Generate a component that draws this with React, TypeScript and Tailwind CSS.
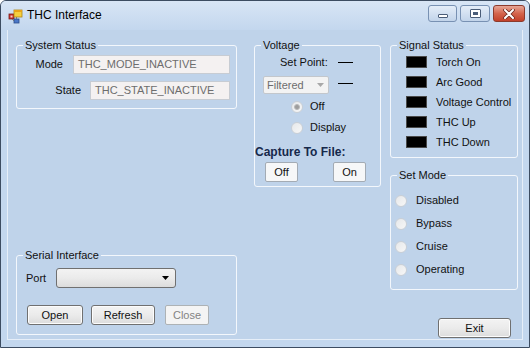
import React from "react"

function GroupBox({ title, className, children }: { title: string; className?: string; children?: React.ReactNode }) {
  return (
    <fieldset className={`border border-[#f3f7fc] rounded-[3px] ${className ?? ""}`}>
      <legend className="ml-[6px] px-[2px] text-[11px] leading-[13px] text-[#111]">{title}</legend>
      {children}
    </fieldset>
  )
}

function WinButton({ label, className, disabled }: { label: string; className?: string; disabled?: boolean }) {
  return disabled ? (
    <div
      className={`flex items-center justify-center h-[20px] rounded-[2px] border border-[#adb2b5] bg-[#f4f4f4] text-[11px] text-[#838383] ${className ?? ""}`}
    >
      {label}
    </div>
  ) : (
    <div
      className={`flex items-center justify-center h-[20px] rounded-[3px] border border-[#707070] bg-linear-to-b from-[#f3f3f3] via-[#ebebeb] to-[#dcdcdc] shadow-[inset_0_0_0_1px_#fcfcfc] text-[11px] text-[#111] ${className ?? ""}`}
    >
      {label}
    </div>
  )
}

function FlatButton({ label, className }: { label: string; className?: string }) {
  return (
    <div
      className={`flex items-center justify-center h-[20px] w-[33px] rounded-[2px] border border-[#a3abb4] bg-[#f6f7f8] text-[11px] text-[#111] ${className ?? ""}`}
    >
      {label}
    </div>
  )
}

function Radio({ checked }: { checked?: boolean }) {
  return (
    <div className="w-[12px] h-[12px] rounded-full border border-[#c9cfd6] bg-linear-to-br from-[#e6e8ea] to-[#f7f7f7] flex items-center justify-center">
      {checked && <div className="w-[6px] h-[6px] rounded-full bg-[#9d9d9d] border border-[#b9b9b9]" />}
    </div>
  )
}

function Signal({ label }: { label: string }) {
  return (
    <div className="flex items-center h-[20px]">
      <div className="ml-[15px] w-[21px] h-[12px] bg-black border border-[#4a4a4a]" />
      <span className="ml-[9px] text-[11px] text-[#111]">{label}</span>
    </div>
  )
}

function ModeOption({ label }: { label: string }) {
  return (
    <div className="flex items-center h-[23px]">
      <div className="ml-[4px]">
        <Radio />
      </div>
      <span className="ml-[9px] text-[11px] text-[#111]">{label}</span>
    </div>
  )
}

function AppIcon() {
  return (
    <svg width="16" height="16" viewBox="0 0 16 16">
      <rect x="1" y="6" width="5" height="5" fill="#c9302c" stroke="#7a1b18" strokeWidth="0.8" />
      <rect x="2.5" y="7.5" width="2" height="2" fill="#f5d0c8" />
      <rect x="6" y="2" width="8" height="7" fill="#f6cf3d" stroke="#b08510" strokeWidth="0.8" />
      <rect x="6" y="2" width="8" height="2" fill="#e8a317" />
      <rect x="6" y="11" width="5" height="4" fill="#4b78c8" stroke="#2c4d8a" strokeWidth="0.8" />
      <line x1="8.5" y1="9" x2="8.5" y2="11" stroke="#6a6a6a" strokeWidth="0.8" />
      <line x1="4" y1="11" x2="6" y2="13" stroke="#6a6a6a" strokeWidth="0.8" />
    </svg>
  )
}

export default function App() {
  return (
    <div className="w-[530px] h-[348px] font-['Liberation_Sans',Arial,sans-serif] bg-[#c3d7ee] border border-[#3c4c61] rounded-t-[6px] flex flex-col overflow-hidden">
      {/* Title bar */}
      <div className="h-[29px] flex items-start bg-linear-to-b from-[#d8e5f5] to-[#c3d7ee]">
        <div className="ml-[7px] mt-[7px]">
          <AppIcon />
        </div>
        <span className="ml-[3px] mt-[7px] text-[12px] leading-[15px] text-black">THC Interface</span>
        <div className="ml-auto mt-[4px] mr-[4px] flex">
          <div className="w-[29px] h-[17px] rounded-[3px] border border-[#7891b3] bg-linear-to-b from-[#e4edf8] to-[#c2d4ea] flex items-end justify-center pb-[3px]">
            <div className="w-[10px] h-[4px] bg-white border border-[#4a5d78] rounded-[1px]" />
          </div>
          <div className="ml-[3px] w-[30px] h-[17px] rounded-[3px] border border-[#7891b3] bg-linear-to-b from-[#e4edf8] to-[#c2d4ea] flex items-center justify-center">
            <div className="w-[11px] h-[9px] bg-white border border-[#4a5d78] rounded-[1px] flex items-center justify-center">
              <div className="w-[5px] h-[3px] bg-[#4a5d78]" />
            </div>
          </div>
          <div className="ml-[3px] w-[32px] h-[17px] rounded-[3px] border border-[#8c3a2c] bg-linear-to-b from-[#e6a595] via-[#d4644c] to-[#c2402a] flex items-center justify-center">
            <svg width="12" height="10" viewBox="0 0 12 10">
              <path d="M2 1 L10 9 M10 1 L2 9" stroke="#6a2a20" strokeWidth="3.6" strokeLinecap="round" />
              <path d="M2 1 L10 9 M10 1 L2 9" stroke="#ffffff" strokeWidth="2" strokeLinecap="round" />
            </svg>
          </div>
        </div>
      </div>

      {/* Client area */}
      <div className="mx-[6px] w-[516px] h-[310px] bg-[#bfd3ea] border border-t-0 border-[#e6eef8] flex text-[#111]">
        {/* Left column */}
        <div className="ml-[8px] w-[221px] flex flex-col">
          <GroupBox title="System Status" className="mt-[9px] h-[70px]">
            <div className="flex flex-col pr-[6px]">
              <div className="mt-[3px] flex items-center justify-end">
                <span className="text-[11px]">Mode</span>
                <div className="ml-[10px] w-[157px] h-[19px] border border-[#c7ccd3] bg-[#f4f1f1] text-[11px] text-[#6d6d6d] flex items-center pl-[4px]">
                  THC_MODE_INACTIVE
                </div>
              </div>
              <div className="mt-[7px] flex items-center justify-end">
                <span className="text-[11px]">State</span>
                <div className="ml-[9px] w-[140px] h-[19px] border border-[#c7ccd3] bg-[#f4f1f1] text-[11px] text-[#6d6d6d] flex items-center pl-[4px]">
                  THC_STATE_INACTIVE
                </div>
              </div>
            </div>
          </GroupBox>

          <GroupBox title="Serial Interface" className="mt-[140px] h-[86px]">
            <div className="mt-[6px] h-[20px] flex items-center">
              <span className="ml-[9px] w-[30px] text-[11px]">Port</span>
              <div className="w-[120px] h-[20px] rounded-[3px] border border-[#707070] bg-linear-to-b from-[#f3f3f3] via-[#ebebeb] to-[#dcdcdc] flex items-center justify-end pr-[6px]">
                <svg width="7" height="4" viewBox="0 0 7 4">
                  <path d="M0 0 H7 L3.5 4 Z" fill="#000" />
                </svg>
              </div>
            </div>
            <div className="mt-[17px] flex">
              <WinButton label="Open" className="ml-[10px] w-[56px]" />
              <WinButton label="Refresh" className="ml-[8px] w-[64px]" />
              <WinButton label="Close" className="ml-[10px] w-[44px]" disabled />
            </div>
          </GroupBox>
        </div>

        {/* Middle column */}
        <div className="ml-[17px] w-[127px] flex flex-col">
          <GroupBox title="Voltage" className="mt-[9px] h-[148px]">
            <div className="flex flex-col">
              <div className="h-[20px] flex items-center">
                <span className="ml-[25px] w-[58px] text-[11px]">Set Point:</span>
                <div className="w-[15px] h-[1px] bg-black" />
              </div>
              <div className="mt-[4px] h-[18px] flex">
                <div className="ml-[8px] w-[66px] h-[18px] rounded-[2px] border border-[#c3c7cc] bg-[#f3f3f3] flex items-center pl-[3px] text-[11px] text-[#6d6d6d]">
                  <span>Filtered</span>
                  <svg className="ml-auto mr-[4px]" width="7" height="4" viewBox="0 0 7 4">
                    <path d="M0 0 H7 L3.5 4 Z" fill="#a8a8a8" />
                  </svg>
                </div>
                <div className="ml-[9px] mt-[7px] w-[15px] h-[1px] bg-black" />
              </div>
              <div className="mt-[2px] h-[21px] flex items-center">
                <div className="ml-[36px]">
                  <Radio checked />
                </div>
                <span className="ml-[7px] text-[11px]">Off</span>
              </div>
              <div className="h-[21px] flex items-center">
                <div className="ml-[36px]">
                  <Radio />
                </div>
                <span className="ml-[7px] text-[11px]">Display</span>
              </div>
              <div className="mt-[5px] h-[18px] flex items-center">
                <span className="text-[12px] font-bold text-[#16284a]">Capture To File:</span>
              </div>
              <div className="mt-[1px] flex">
                <FlatButton label="Off" className="ml-[10px]" />
                <FlatButton label="On" className="ml-[35px]" />
              </div>
            </div>
          </GroupBox>
        </div>

        {/* Right column */}
        <div className="ml-[9px] w-[128px] flex flex-col">
          <GroupBox title="Signal Status" className="mt-[9px] h-[119px]">
            <div className="flex flex-col">
              <Signal label="Torch On" />
              <Signal label="Arc Good" />
              <Signal label="Voltage Control" />
              <Signal label="THC Up" />
              <Signal label="THC Down" />
            </div>
          </GroupBox>
          <GroupBox title="Set Mode" className="mt-[11px] h-[121px]">
            <div className="mt-[7px] flex flex-col">
              <ModeOption label="Disabled" />
              <ModeOption label="Bypass" />
              <ModeOption label="Cruise" />
              <ModeOption label="Operating" />
            </div>
          </GroupBox>
          <div className="mt-[28px] flex justify-end">
            <WinButton label="Exit" className="mr-[7px] w-[73px]" />
          </div>
        </div>
      </div>
    </div>
  )
}
